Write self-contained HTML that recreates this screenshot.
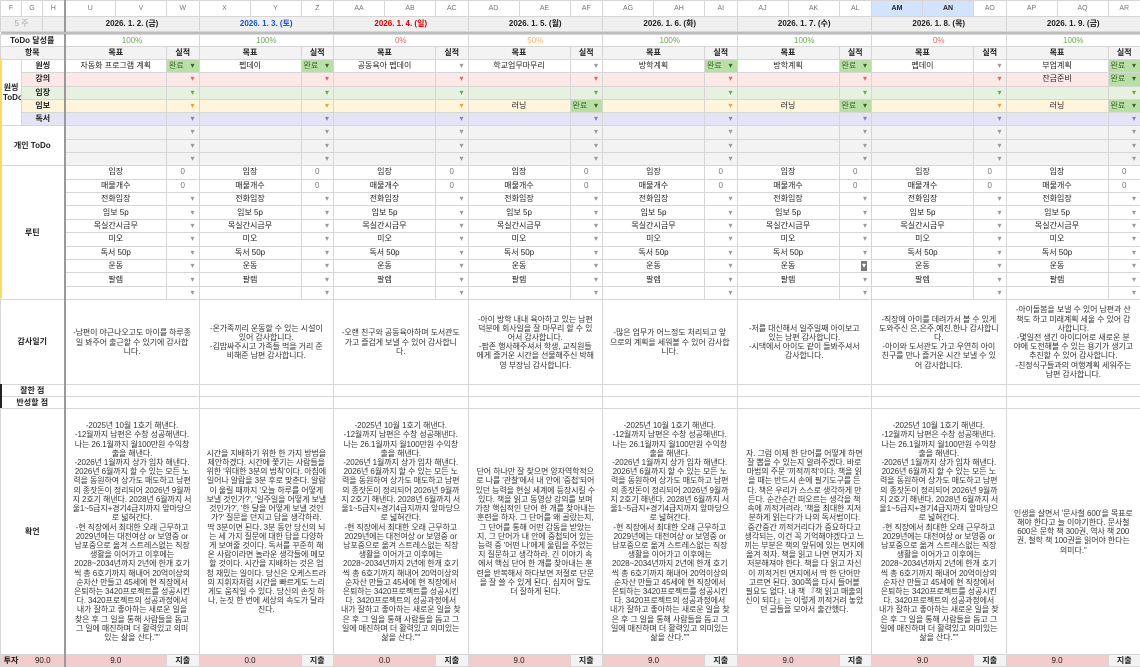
<!DOCTYPE html>
<html><head><meta charset="utf-8">
<style>
body{margin:0;width:1140px;height:665px;overflow:hidden;background:#fff;font-family:"Liberation Sans","Noto Sans CJK KR",sans-serif;font-size:8px;color:#222}
table{border-collapse:collapse;table-layout:fixed;width:1140px}
td{border:1px solid #d6d6d6;padding:0 2px;text-align:center;white-space:nowrap;overflow:hidden;line-height:10px;vertical-align:middle}
.ch{color:#777;font-size:7px;background:#fff}
.chs{background:#d3e3fd;color:#222;font-weight:bold;font-size:7px}
.dt{background:#efefef;font-weight:bold}
.blue{color:#1155cc}.red{color:#cc0000}
.wk{background:#efefef;color:#aaa}
.sep td{background:#bdbdbd;border:none;height:2px;padding:0}
.g{color:#6aa84f}.r{color:#e06666}.o{color:#f6b26b}
.lb{font-weight:bold;background:#fff}
.hd{background:#f3f3f3;font-weight:bold}
.pk{background:#fce8e6}.gr{background:#e6f2df}.yl{background:#fff5dc}.pu{background:#e5e3f6}.gy{background:#f3f3f3}
i{font-style:normal;float:right;color:#999;font-size:8px;margin-right:2px}
.kang i{color:#e06666}.imj i{color:#6aa84f}.imb i{color:#e6a23c}.dok i{color:#8e7cc3}
.dn{background:#b9dfa6;text-align:left;color:#38662a}
.dn i{color:#38662a}
.tx{white-space:normal;line-height:9.2px;font-size:8px;padding:0 7px;color:#333;letter-spacing:-0.1px}
.pk2{background:#f4cccc}
.jc{background:#f3f3f3;font-weight:bold}
tr.h16 td{height:15px}
tr.h15 td{height:14px}
tr.h12 td{height:11px}
tr.h13 td{height:12.2px}
tr.h134 td{height:12.4px}
</style></head><body>
<div style="position:absolute;left:0;top:58px;width:2px;height:240px;background:#ffd966;z-index:2"></div>
<div style="position:absolute;left:0;top:384px;width:2px;height:24px;background:#222;z-index:2"></div>
<table>
<colgroup>
<col style="width:21px"><col style="width:21px"><col style="width:22px;border-right:2px solid #999">
<col style="width:51px;border-left:1px solid #999"><col style="width:51px"><col style="width:32.5px">
<col style="width:51px;border-left:1px solid #999"><col style="width:51px"><col style="width:32.5px">
<col style="width:51px;border-left:1px solid #999"><col style="width:51px"><col style="width:32.5px">
<col style="width:51px;border-left:1px solid #999"><col style="width:51px"><col style="width:32.5px">
<col style="width:51px;border-left:1px solid #999"><col style="width:51px"><col style="width:32.5px">
<col style="width:51px;border-left:1px solid #999"><col style="width:51px"><col style="width:32.5px">
<col style="width:51px;border-left:1px solid #999"><col style="width:51px"><col style="width:32.5px">
<col style="width:51px;border-left:1px solid #999"><col style="width:51px"><col style="width:32.5px">
</colgroup>
<tr class="h16"><td class="ch">F</td><td class="ch">G</td><td class="ch">H</td>
<td class="ch">U</td><td class="ch">V</td><td class="ch">W</td>
<td class="ch">X</td><td class="ch">Y</td><td class="ch">Z</td>
<td class="ch">AA</td><td class="ch">AB</td><td class="ch">AC</td>
<td class="ch">AD</td><td class="ch">AE</td><td class="ch">AF</td>
<td class="ch">AG</td><td class="ch">AH</td><td class="ch">AI</td>
<td class="ch">AJ</td><td class="ch">AK</td><td class="ch">AL</td>
<td class="chs">AM</td><td class="chs">AN</td><td class="ch">AO</td>
<td class="ch">AP</td><td class="ch">AQ</td><td class="ch">AR</td></tr>
<tr class="h15"><td colspan="2" class="wk">5 주</td><td class="wk"></td>
<td colspan="3" class="dt">2026. 1. 2. (금)</td>
<td colspan="3" class="dt blue">2026. 1. 3. (토)</td>
<td colspan="3" class="dt red">2026. 1. 4. (일)</td>
<td colspan="3" class="dt">2026. 1. 5. (월)</td>
<td colspan="3" class="dt">2026. 1. 6. (화)</td>
<td colspan="3" class="dt">2026. 1. 7. (수)</td>
<td colspan="3" class="dt">2026. 1. 8. (목)</td>
<td colspan="3" class="dt">2026. 1. 9. (금)</td></tr>
<tr class="sep"><td colspan="27"></td></tr>
<tr class="h12"><td colspan="3" class="lb">ToDo 달성률</td>
<td colspan="3" class="g">100%</td><td colspan="3" class="g">100%</td><td colspan="3" class="r">0%</td><td colspan="3" class="o">50%</td>
<td colspan="3" class="g">100%</td><td colspan="3" class="g">100%</td><td colspan="3" class="r">0%</td><td colspan="3" class="g">100%</td></tr>
<tr class="h13"><td colspan="3" class="lb hd">항목</td>
<td colspan="2" class="hd">목표</td><td class="hd">실적</td><td colspan="2" class="hd">목표</td><td class="hd">실적</td>
<td colspan="2" class="hd">목표</td><td class="hd">실적</td><td colspan="2" class="hd">목표</td><td class="hd">실적</td>
<td colspan="2" class="hd">목표</td><td class="hd">실적</td><td colspan="2" class="hd">목표</td><td class="hd">실적</td>
<td colspan="2" class="hd">목표</td><td class="hd">실적</td><td colspan="2" class="hd">목표</td><td class="hd">실적</td></tr>
<tr class="h13"><td rowspan="5" class="lb">원씽<br>ToDo</td><td colspan="2" class="lb">원씽</td>
<td colspan="2">자동화 프로그램 계획</td><td class="dn">완료<i>▾</i></td>
<td colspan="2">펩데이</td><td class="dn">완료<i>▾</i></td>
<td colspan="2">공동육아 펩데이</td><td><i>▾</i></td>
<td colspan="2">학교업무마무리</td><td><i>▾</i></td>
<td colspan="2">방학계획</td><td class="dn">완료<i>▾</i></td>
<td colspan="2">방학계획</td><td class="dn">완료<i>▾</i></td>
<td colspan="2">펩데이</td><td><i>▾</i></td>
<td colspan="2">부업계획</td><td class="dn">완료<i>▾</i></td></tr>
<tr class="h13 kang"><td colspan="2" class="lb pk">강의</td>
<td colspan="2" class="pk"></td><td class="pk"><i>▾</i></td>
<td colspan="2" class="pk"></td><td class="pk"><i>▾</i></td>
<td colspan="2" class="pk"></td><td class="pk"><i>▾</i></td>
<td colspan="2" class="pk"></td><td class="pk"><i>▾</i></td>
<td colspan="2" class="pk"></td><td class="pk"><i>▾</i></td>
<td colspan="2" class="pk"></td><td class="pk"><i>▾</i></td>
<td colspan="2" class="pk"></td><td class="pk"><i>▾</i></td>
<td colspan="2" class="pk">잔금준비</td><td class="dn">완료<i>▾</i></td></tr>
<tr class="h13 imj"><td colspan="2" class="lb gr">임장</td>
<td colspan="2" class="gr"></td><td class="gr"><i>▾</i></td>
<td colspan="2" class="gr"></td><td class="gr"><i>▾</i></td>
<td colspan="2" class="gr"></td><td class="gr"><i>▾</i></td>
<td colspan="2" class="gr"></td><td class="gr"><i>▾</i></td>
<td colspan="2" class="gr"></td><td class="gr"><i>▾</i></td>
<td colspan="2" class="gr"></td><td class="gr"><i>▾</i></td>
<td colspan="2" class="gr"></td><td class="gr"><i>▾</i></td>
<td colspan="2" class="gr"></td><td class="gr"><i>▾</i></td></tr>
<tr class="h13 imb"><td colspan="2" class="lb yl">임보</td>
<td colspan="2" class="yl"></td><td class="yl"><i>▾</i></td>
<td colspan="2" class="yl"></td><td class="yl"><i>▾</i></td>
<td colspan="2" class="yl"></td><td class="yl"><i>▾</i></td>
<td colspan="2" class="yl">러닝</td><td class="dn">완료<i>▾</i></td>
<td colspan="2" class="yl"></td><td class="yl"><i>▾</i></td>
<td colspan="2" class="yl">러닝</td><td class="dn">완료<i>▾</i></td>
<td colspan="2" class="yl"></td><td class="yl"><i>▾</i></td>
<td colspan="2" class="yl">러닝</td><td class="dn">완료<i>▾</i></td></tr>
<tr class="h13 dok"><td colspan="2" class="lb pu">독서</td>
<td colspan="2" class="pu"></td><td class="pu"><i>▾</i></td>
<td colspan="2" class="pu"></td><td class="pu"><i>▾</i></td>
<td colspan="2" class="pu"></td><td class="pu"><i>▾</i></td>
<td colspan="2" class="pu"></td><td class="pu"><i>▾</i></td>
<td colspan="2" class="pu"></td><td class="pu"><i>▾</i></td>
<td colspan="2" class="pu"></td><td class="pu"><i>▾</i></td>
<td colspan="2" class="pu"></td><td class="pu"><i>▾</i></td>
<td colspan="2" class="pu"></td><td class="pu"><i>▾</i></td></tr>
<tr class="h134"><td colspan="3" rowspan="3" class="lb">개인 ToDo</td>
<td colspan="2" class="gy"></td><td class="gy"><i>▾</i></td><td colspan="2" class="gy"></td><td class="gy"><i>▾</i></td>
<td colspan="2" class="gy"></td><td class="gy"><i>▾</i></td><td colspan="2" class="gy"></td><td class="gy"><i>▾</i></td>
<td colspan="2" class="gy"></td><td class="gy"><i>▾</i></td><td colspan="2" class="gy"></td><td class="gy"><i>▾</i></td>
<td colspan="2" class="gy"></td><td class="gy"><i>▾</i></td><td colspan="2" class="gy"></td><td class="gy"><i>▾</i></td></tr>
<tr class="h134">
<td colspan="2" class="gy"></td><td class="gy"><i>▾</i></td><td colspan="2" class="gy"></td><td class="gy"><i>▾</i></td>
<td colspan="2" class="gy"></td><td class="gy"><i>▾</i></td><td colspan="2" class="gy"></td><td class="gy"><i>▾</i></td>
<td colspan="2" class="gy"></td><td class="gy"><i>▾</i></td><td colspan="2" class="gy"></td><td class="gy"><i>▾</i></td>
<td colspan="2" class="gy"></td><td class="gy"><i>▾</i></td><td colspan="2" class="gy"></td><td class="gy"><i>▾</i></td></tr>
<tr class="h134">
<td colspan="2" class="gy"></td><td class="gy"><i>▾</i></td><td colspan="2" class="gy"></td><td class="gy"><i>▾</i></td>
<td colspan="2" class="gy"></td><td class="gy"><i>▾</i></td><td colspan="2" class="gy"></td><td class="gy"><i>▾</i></td>
<td colspan="2" class="gy"></td><td class="gy"><i>▾</i></td><td colspan="2" class="gy"></td><td class="gy"><i>▾</i></td>
<td colspan="2" class="gy"></td><td class="gy"><i>▾</i></td><td colspan="2" class="gy"></td><td class="gy"><i>▾</i></td></tr>
<tr class="h134"><td colspan="3" rowspan="10" class="lb">루틴</td>
<td colspan="2">임장</td><td style="color:#777">0</td><td colspan="2">임장</td><td style="color:#777">0</td><td colspan="2">임장</td><td style="color:#777">0</td><td colspan="2">임장</td><td style="color:#777">0</td>
<td colspan="2">임장</td><td style="color:#777">0</td><td colspan="2">임장</td><td style="color:#777">0</td><td colspan="2">임장</td><td style="color:#777">0</td><td colspan="2">임장</td><td style="color:#777">0</td></tr>
<tr class="h134">
<td colspan="2">매물개수</td><td style="color:#777">0</td><td colspan="2">매물개수</td><td style="color:#777">0</td><td colspan="2">매물개수</td><td style="color:#777">0</td><td colspan="2">매물개수</td><td style="color:#777">0</td>
<td colspan="2">매물개수</td><td style="color:#777">0</td><td colspan="2">매물개수</td><td style="color:#777">0</td><td colspan="2">매물개수</td><td style="color:#777">0</td><td colspan="2">매물개수</td><td style="color:#777">0</td></tr>
<tr class="h134">
<td colspan="2">전화임장</td><td><i>▾</i></td><td colspan="2">전화임장</td><td><i>▾</i></td><td colspan="2">전화임장</td><td><i>▾</i></td><td colspan="2">전화임장</td><td><i>▾</i></td>
<td colspan="2">전화임장</td><td><i>▾</i></td><td colspan="2">전화임장</td><td><i>▾</i></td><td colspan="2">전화임장</td><td><i>▾</i></td><td colspan="2">전화임장</td><td><i>▾</i></td></tr>
<tr class="h134">
<td colspan="2">임보 5p</td><td><i>▾</i></td><td colspan="2">임보 5p</td><td><i>▾</i></td><td colspan="2">임보 5p</td><td><i>▾</i></td><td colspan="2">임보 5p</td><td><i>▾</i></td>
<td colspan="2">임보 5p</td><td><i>▾</i></td><td colspan="2">임보 5p</td><td><i>▾</i></td><td colspan="2">임보 5p</td><td><i>▾</i></td><td colspan="2">임보 5p</td><td><i>▾</i></td></tr>
<tr class="h134">
<td colspan="2">목실간시금무</td><td><i>▾</i></td><td colspan="2">목실간시금무</td><td><i>▾</i></td><td colspan="2">목실간시금무</td><td><i>▾</i></td><td colspan="2">목실간시금무</td><td><i>▾</i></td>
<td colspan="2">목실간시금무</td><td><i>▾</i></td><td colspan="2">목실간시금무</td><td><i>▾</i></td><td colspan="2">목실간시금무</td><td><i>▾</i></td><td colspan="2">목실간시금무</td><td><i>▾</i></td></tr>
<tr class="h134">
<td colspan="2">미오</td><td><i>▾</i></td><td colspan="2">미오</td><td><i>▾</i></td><td colspan="2">미오</td><td><i>▾</i></td><td colspan="2">미오</td><td><i>▾</i></td>
<td colspan="2">미오</td><td><i>▾</i></td><td colspan="2">미오</td><td><i>▾</i></td><td colspan="2">미오</td><td><i>▾</i></td><td colspan="2">미오</td><td><i>▾</i></td></tr>
<tr class="h134">
<td colspan="2">독서 50p</td><td><i>▾</i></td><td colspan="2">독서 50p</td><td><i>▾</i></td><td colspan="2">독서 50p</td><td><i>▾</i></td><td colspan="2">독서 50p</td><td><i>▾</i></td>
<td colspan="2">독서 50p</td><td><i>▾</i></td><td colspan="2">독서 50p</td><td><i>▾</i></td><td colspan="2">독서 50p</td><td><i>▾</i></td><td colspan="2">독서 50p</td><td><i>▾</i></td></tr>
<tr class="h134">
<td colspan="2">운동</td><td><i>▾</i></td><td colspan="2">운동</td><td><i>▾</i></td><td colspan="2">운동</td><td><i>▾</i></td><td colspan="2">운동</td><td><i>▾</i></td>
<td colspan="2">운동</td><td><i>▾</i></td><td colspan="2">운동</td><td><i style="background:#777;color:#fff;padding:0 1px">▾</i></td><td colspan="2">운동</td><td><i>▾</i></td><td colspan="2">운동</td><td><i>▾</i></td></tr>
<tr class="h134">
<td colspan="2">팔렙</td><td><i>▾</i></td><td colspan="2">팔렙</td><td><i>▾</i></td><td colspan="2">팔렙</td><td><i>▾</i></td><td colspan="2">팔렙</td><td><i>▾</i></td>
<td colspan="2">팔렙</td><td><i>▾</i></td><td colspan="2">팔렙</td><td><i>▾</i></td><td colspan="2">팔렙</td><td><i>▾</i></td><td colspan="2">팔렙</td><td><i>▾</i></td></tr>
<tr class="h134">
<td colspan="2"></td><td><i>▾</i></td><td colspan="2"></td><td><i>▾</i></td><td colspan="2"></td><td><i>▾</i></td><td colspan="2"></td><td><i>▾</i></td>
<td colspan="2"></td><td><i>▾</i></td><td colspan="2"></td><td><i>▾</i></td><td colspan="2"></td><td><i>▾</i></td><td colspan="2"></td><td><i>▾</i></td></tr>
<tr><td colspan="3" class="lb" style="height:84px">감사일기</td>
<td colspan="3" class="tx">-남편이 야근나오고도 아이를 하루종일 봐주어 출근할 수 있기에 감사합니다.</td>
<td colspan="3" class="tx">-온가족끼리 운동할 수 있는 시설이 있어 감사합니다.<br>-김밥싸주시고 가족들 먹을 거리 준비해준 남편 감사합니다.</td>
<td colspan="3" class="tx">-오랜 친구와 공동육아하며 도서관도 가고 즐겁게 보낼 수 있어 감사합니다.</td>
<td colspan="3" class="tx">-아이 방학 내내 육아하고 있는 남편 덕분에 회사일을 잘 마무리 할 수 있어서 감사합니다.<br>-팜존 행사해주셔서 학생, 교직원들에게 즐거운 시간을 선물해주신 박해영 부장님 감사합니다.</td>
<td colspan="3" class="tx">-많은 업무가 어느정도 처리되고 앞으로의 계획을 세워볼 수 있어 감사합니다.</td>
<td colspan="3" class="tx">-저를 대신해서 일주일째 아이보고 있는 남편 감사합니다.<br>-시댁에서 아이도 같이 돌봐주셔서 감사합니다.</td>
<td colspan="3" class="tx">-직장에 아이를 데려가서 볼 수 있게 도와주신 은,은주,예진,한나 감사합니다.<br>-아이와 도서관도 가고 우연히 아이 친구를 만나 즐거운 시간 보낼 수 있어 감사합니다.</td>
<td colspan="3" class="tx">-아이돌봄을 보낼 수 있어 남편과 산책도 하고 미래계획 세울 수 있어 감사합니다.<br>-몇일전 생긴 아이디어로 새로운 분야에 도전해볼 수 있는 용기가 생기고 추진할 수 있어 감사합니다.<br>-친정식구들과의 여행계획 세워주는 남편 감사합니다.</td></tr>
<tr class="h12"><td colspan="3" class="lb">잘한 점</td><td colspan="3"></td><td colspan="3"></td><td colspan="3"></td><td colspan="3"></td><td colspan="3"></td><td colspan="3"></td><td colspan="3"></td><td colspan="3"></td></tr>
<tr class="h12"><td colspan="3" class="lb">반성할 점</td><td colspan="3"></td><td colspan="3"></td><td colspan="3"></td><td colspan="3"></td><td colspan="3"></td><td colspan="3"></td><td colspan="3"></td><td colspan="3"></td></tr>
<tr><td colspan="3" class="lb" style="height:245px">확언</td>
<td colspan="3" class="tx">-2025년 10월 1호기 해낸다.<br>-12월까지 남편은 수창 성공해낸다. 나는 26.1월까지 월100만원 수익창출을 해낸다.<br>-2026년 1월까지 상가 임차 해낸다. 2026년 6월까지 할 수 있는 모든 노력을 동원하여 상가도 매도하고 남편의 종잣돈이 정리되어 2026년 9월까지 2호기 해낸다. 2028년 6월까지 서울1~5급지+경기4급지까지 앞마당으로 넓혀간다.<br>-현 직장에서 최대한 오래 근무하고 2029년에는 대전여상 or 보영중 or 남포중으로 옮겨 스트레스없는 직장생활을 이어가고 이후에는 2028~2034년까지 2년에 한개 호기씩 총 6호기까지 해내어 20억이상의 순자산 만들고 45세에 현 직장에서 은퇴하는 3420프로젝트를 성공시킨다. 3420프로젝트의 성공과정에서 내가 잘하고 좋아하는 새로운 일을 찾은 후 그 일을 통해 사람들을 돕고 그 일에 매진하며 더 활력있고 의미있는 삶을 산다.""</td>
<td colspan="3" class="tx">시간을 지배하기 위한 한 가지 방법을 제안하겠다. 시간에 쫓기는 사람들을 위한 '위대한 3분의 법칙'이다. 아침에 일어나 알람을 3분 후로 맞춘다. 알람이 울릴 때까지 '오늘 하루를 어떻게 보낼 것인가?', '일주일을 어떻게 보낼 것인가?', '한 달을 어떻게 보낼 것인가?' 질문을 던지고 답을 생각하라. 딱 3분이면 된다. 3분 동안 당신의 뇌는 세 가지 질문에 대한 답을 다양하게 보여줄 것이다. 독서를 꾸준히 해온 사람이라면 놀라운 생각들에 메모할 것이다. 시간을 지배하는 것은 엄청 재밌는 일이다. 당신은 오케스트라의 지휘자처럼 시간을 빠르게도 느리게도 움직일 수 있다. 당신의 손짓 하나, 눈짓 한 번에 세상의 속도가 달라진다.</td>
<td colspan="3" class="tx">-2025년 10월 1호기 해낸다.<br>-12월까지 남편은 수창 성공해낸다. 나는 26.1월까지 월100만원 수익창출을 해낸다.<br>-2026년 1월까지 상가 임차 해낸다. 2026년 6월까지 할 수 있는 모든 노력을 동원하여 상가도 매도하고 남편의 종잣돈이 정리되어 2026년 9월까지 2호기 해낸다. 2028년 6월까지 서울1~5급지+경기4급지까지 앞마당으로 넓혀간다.<br>-현 직장에서 최대한 오래 근무하고 2029년에는 대전여상 or 보영중 or 남포중으로 옮겨 스트레스없는 직장생활을 이어가고 이후에는 2028~2034년까지 2년에 한개 호기씩 총 6호기까지 해내어 20억이상의 순자산 만들고 45세에 현 직장에서 은퇴하는 3420프로젝트를 성공시킨다. 3420프로젝트의 성공과정에서 내가 잘하고 좋아하는 새로운 일을 찾은 후 그 일을 통해 사람들을 돕고 그 일에 매진하며 더 활력있고 의미있는 삶을 산다.""</td>
<td colspan="3" class="tx">단어 하나만 잘 찾으면 양자역학적으로 나를 '관찰'에서 내 안에 '중첩'되어 있던 능력을 현실 세계에 등장시킬 수 있다. 책을 읽고 동영상 강의를 보며 가장 핵심적인 단어 한 개를 찾아내는 훈련을 하자. 그 단어를 왜 골랐는지, 그 단어를 통해 어떤 감동을 받았는지, 그 단어가 내 안에 중첩되어 있는 능력 중 '어떤 나'에게 울림을 주었는지 질문하고 생각하라. 긴 이야기 속에서 핵심 단어 한 개를 찾아내는 훈련을 반복해서 하다보면 저절로 단문을 잘 쓸 수 있게 된다. 심지어 말도 더 잘하게 된다.</td>
<td colspan="3" class="tx">-2025년 10월 1호기 해낸다.<br>-12월까지 남편은 수창 성공해낸다. 나는 26.1월까지 월100만원 수익창출을 해낸다.<br>-2026년 1월까지 상가 임차 해낸다. 2026년 6월까지 할 수 있는 모든 노력을 동원하여 상가도 매도하고 남편의 종잣돈이 정리되어 2026년 9월까지 2호기 해낸다. 2028년 6월까지 서울1~5급지+경기4급지까지 앞마당으로 넓혀간다.<br>-현 직장에서 최대한 오래 근무하고 2029년에는 대전여상 or 보영중 or 남포중으로 옮겨 스트레스없는 직장생활을 이어가고 이후에는 2028~2034년까지 2년에 한개 호기씩 총 6호기까지 해내어 20억이상의 순자산 만들고 45세에 현 직장에서 은퇴하는 3420프로젝트를 성공시킨다. 3420프로젝트의 성공과정에서 내가 잘하고 좋아하는 새로운 일을 찾은 후 그 일을 통해 사람들을 돕고 그 일에 매진하며 더 활력있고 의미있는 삶을 산다.""</td>
<td colspan="3" class="tx">자. 그럼 이제 한 단어를 어떻게 하면 잘 뽑을 수 있는지 알려주겠다. 바로 마법의 주문 '끼적끼적'이다. 책을 읽을 때는 반드시 손에 필기도구를 든다. 책은 우리가 스스로 생각하게 만든다. 순간순간 떠오르는 생각을 책 속에 끼적거려라. '책을 최대한 지저분하게 읽는다'가 나의 독서법이다. 중간중간 끼적거리다가 중요하다고 생각되는, 이건 꼭 기억해야겠다고 느끼는 부분은 책의 앞뒤에 있는 면지에 옮겨 적자. 책을 읽고 나면 면지가 지저분해져야 한다. 책을 다 읽고 자신이 끼적거린 면지에서 딱 한 단어만 고르면 된다. 300쪽을 다시 들어볼 필요도 없다. 내 책 『책 읽고 매출의 신이 되다』는 이렇게 끼적거려 놓았던 글들을 모아서 출간했다.</td>
<td colspan="3" class="tx">-2025년 10월 1호기 해낸다.<br>-12월까지 남편은 수창 성공해낸다. 나는 26.1월까지 월100만원 수익창출을 해낸다.<br>-2026년 1월까지 상가 임차 해낸다. 2026년 6월까지 할 수 있는 모든 노력을 동원하여 상가도 매도하고 남편의 종잣돈이 정리되어 2026년 9월까지 2호기 해낸다. 2028년 6월까지 서울1~5급지+경기4급지까지 앞마당으로 넓혀간다.<br>-현 직장에서 최대한 오래 근무하고 2029년에는 대전여상 or 보영중 or 남포중으로 옮겨 스트레스없는 직장생활을 이어가고 이후에는 2028~2034년까지 2년에 한개 호기씩 총 6호기까지 해내어 20억이상의 순자산 만들고 45세에 현 직장에서 은퇴하는 3420프로젝트를 성공시킨다. 3420프로젝트의 성공과정에서 내가 잘하고 좋아하는 새로운 일을 찾은 후 그 일을 통해 사람들을 돕고 그 일에 매진하며 더 활력있고 의미있는 삶을 산다.""</td>
<td colspan="3" class="tx">인생을 살면서 '문사철 600'을 목표로 해야 한다고 늘 이야기한다. 문사철 600은 문학 책 300권, 역사 책 200권, 철학 책 100권을 읽어야 한다는 의미다."</td></tr>
<tr class="h12"><td class="lb pk2">투자</td><td colspan="2" class="pk2">90.0</td>
<td colspan="2" class="pk2">9.0</td><td class="jc">지출</td><td colspan="2" class="pk2">0.0</td><td class="jc">지출</td>
<td colspan="2" class="pk2">0.0</td><td class="jc">지출</td><td colspan="2" class="pk2">9.0</td><td class="jc">지출</td>
<td colspan="2" class="pk2">9.0</td><td class="jc">지출</td><td colspan="2" class="pk2">9.0</td><td class="jc">지출</td>
<td colspan="2" class="pk2">9.0</td><td class="jc">지출</td><td colspan="2" class="pk2">9.0</td><td class="jc">지출</td></tr>
</table>
</body></html>
